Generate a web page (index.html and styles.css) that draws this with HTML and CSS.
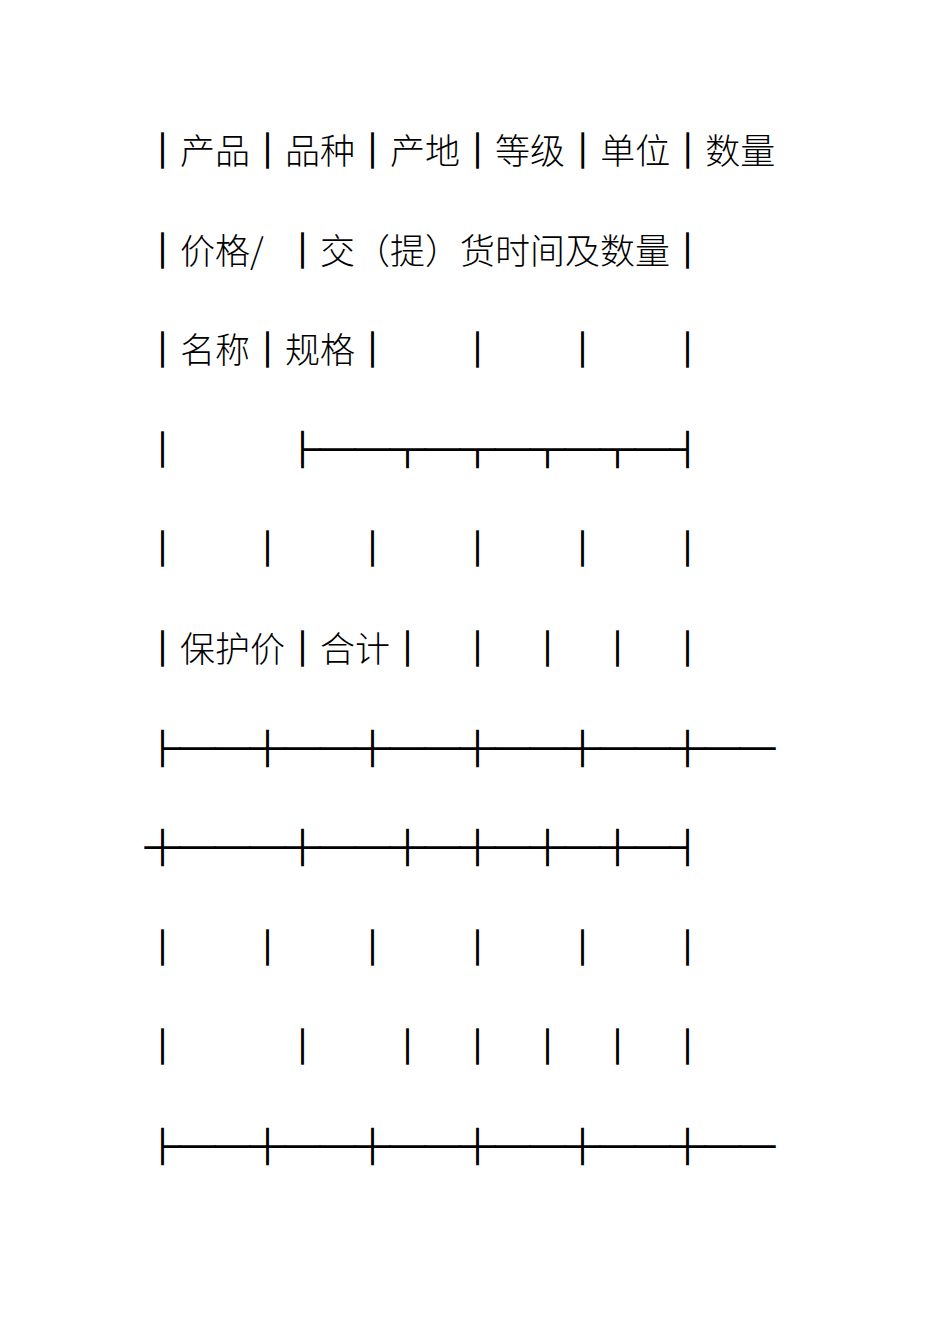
FILE: index.html
```html
<!DOCTYPE html>
<html lang="zh-CN">
<head>
<meta charset="utf-8">
<title>产品价格表</title>
<link rel="stylesheet" href="styles.css">
</head>
<body>
<div class="doc">
<p class="row">│<span class="t">产品</span>│<span class="t">品种</span>│<span class="t">产地</span>│<span class="t">等级</span>│<span class="t">单位</span>│<span class="t">数量</span></p>
<p class="row">│<span class="t">价格<span class="half">/ </span></span>│<span class="t">交（提）货时间及数量</span>│</p>
<p class="row">│<span class="t">名称</span>│<span class="t">规格</span>│　　│　　│　　│</p>
<p class="row">│　　　├──┬─┬─┬─┬─┤</p>
<p class="row">│　　│　　│　　│　　│　　│</p>
<p class="row">│<span class="t">保护价</span>│<span class="t">合计</span>│　│　│　│　│</p>
<p class="row">├──┼──┼──┼──┼──┼──</p>
<p class="row">┼───┼──┼─┼─┼─┼─┤</p>
<p class="row">│　　│　　│　　│　　│　　│</p>
<p class="row">│　　　│　　│　│　│　│　│</p>
<p class="row">├──┼──┼──┼──┼──┼──</p>
</div>
</body>
</html>
```

FILE: styles.css
```css
html, body {
  margin: 0;
  padding: 0;
  background: #ffffff;
}

.doc {
  padding: 99px 0 0 145px;
  font-family: "Noto Sans CJK SC", "Noto Sans", sans-serif;
  font-size: 35px;
  line-height: 99.6px;
  color: #000000;
}

.row {
  margin: 0;
  height: 99.6px;
  white-space: pre;
  font-weight: 700;
  -webkit-text-stroke: 1.4px #000000;
}

.t {
  font-weight: 300;
  -webkit-text-stroke: 0;
}

.half {
  display: inline-block;
  width: 1em;
}
```
